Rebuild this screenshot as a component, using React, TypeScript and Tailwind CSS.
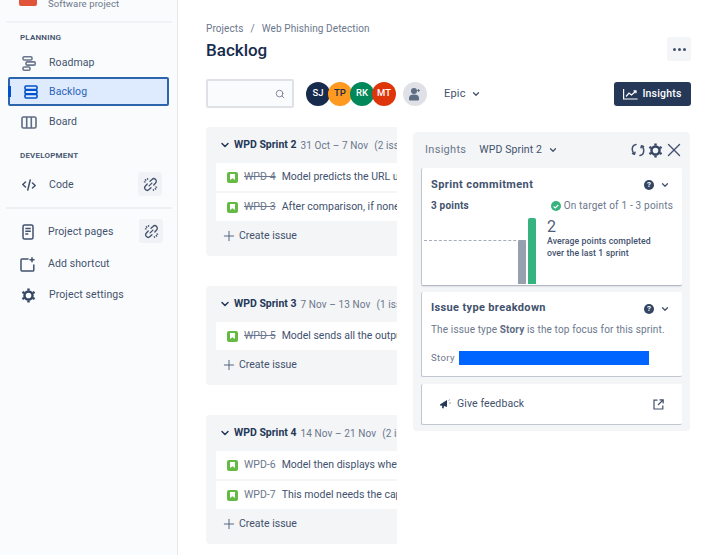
import { ChevronDown, Plus, Search, X } from "lucide-react";
import type { ReactNode } from "react";

const sprints = [
  {
    name: "WPD Sprint 2",
    dates: "31 Oct – 7 Nov",
    count: "(2 issues)",
    issues: [
      { key: "WPD-4", title: "Model predicts the URL using the trained data", done: true },
      { key: "WPD-3", title: "After comparison, if none of the URLs match", done: true },
    ],
  },
  {
    name: "WPD Sprint 3",
    dates: "7 Nov – 13 Nov",
    count: "(1 issue)",
    issues: [{ key: "WPD-5", title: "Model sends all the output to the user", done: true }],
  },
  {
    name: "WPD Sprint 4",
    dates: "14 Nov – 21 Nov",
    count: "(2 issues)",
    issues: [
      { key: "WPD-6", title: "Model then displays whether the URL is safe", done: false },
      { key: "WPD-7", title: "This model needs the capability to update", done: false },
    ],
  },
];

const avatars = [
  { text: "SJ", style: "bg-[#172b4d] text-white z-[1]" },
  { text: "TP", style: "bg-[#ff991f] text-[#172b4d] z-[2]" },
  { text: "RK", style: "bg-[#00875a] text-white z-[3]" },
  { text: "MT", style: "bg-[#de350b] text-white z-[4]" },
];

function LinkBreak() {
  return (
    <svg width="15" height="15" viewBox="0 0 16 16" fill="none" stroke="#42526e" strokeWidth="1.4" strokeLinecap="round">
      <path d="M6.5 9.5 9.5 6.5" />
      <path d="M7.5 4.500 9.600 2.600a2.600 2.600 0 0 1 3.800 3.800l-1.900 2.100" />
      <path d="M8.500 11.500 6.400 13.400a2.600 2.600 0 0 1-3.800-3.800l1.900-2.100" />
      <path d="M2.500 3 3 3.500M4.800 1.800 5 2.400M1.500 5.200l.6.1M13.500 12.800 13 12.400M11.200 14.200 11 13.600M14.500 10.800l-.6-.1" />
    </svg>
  );
}

function NavRow({ icon, label, className, tail }: { icon: ReactNode; label: string; className: string; tail?: ReactNode }) {
  return (
    <div className={`flex items-center ${className}`}>
      <div className="mt-[2px] flex w-[29px] shrink-0 justify-center">{icon}</div>
      <span className="ml-[6px] mt-[2px] text-[10.5px] tracking-[0.1px] text-[#42526e]">{label}</span>
      {tail && <div className="ml-auto flex h-6 w-6 items-center justify-center rounded-[3px] bg-[#f0f2f5]">{tail}</div>}
    </div>
  );
}

function Gear({ size, color }: { size: number; color: string }) {
  return (
    <svg width={size} height={size} viewBox="0 0 16 16" fill="none" stroke={color}>
      <circle cx="8" cy="8" r="4.300" strokeWidth="2.600" />
      <path strokeWidth="2.600" d="M8 .5v2.200M8 13.300v2.200M1.500 4.300l1.900 1.100M12.600 10.600l1.900 1.100M1.500 11.700l1.900-1.100M12.600 5.400l1.900-1.100" />
    </svg>
  );
}

function Sidebar() {
  return (
    <aside className="h-[555px] w-[178px] shrink-0 overflow-hidden border-r border-[#e6e9ee] bg-[#fafbfc]">
      <div className="mx-[6px] flex h-[23px] w-[166px] items-start border-b-2 border-[#f1f2f5]">
        <div className="relative -mt-3 ml-[13px] h-[18px] w-[18px] shrink-0 overflow-hidden rounded-[2px] bg-[#e2543a]">
          <div className="absolute left-[4px] top-[-4px] h-[9px] w-[10px] rounded-full bg-[#253858]" />
        </div>
        <span className="-mt-[2px] ml-[11px] whitespace-nowrap text-[9.5px] leading-[12px] tracking-[0.1px] text-[#6b778c]">Software project</span>
      </div>
      <div className="pl-[20px] pt-[10px] text-[8px] font-semibold leading-[10px] tracking-[0.2px] text-[#42526e]">PLANNING</div>
      <NavRow
        className="mt-[4px] h-[30px] pl-[14px]"
        label="Roadmap"
        icon={
          <svg width="14" height="15" viewBox="0 0 14 15" fill="none" stroke="#6b778c" strokeWidth="1.600">
            <rect x="1" y=".8" width="9" height="3.200" rx="1.200" />
            <rect x="4" y="5.900" width="9.200" height="3.200" rx="1.200" />
            <rect x="1" y="11" width="7" height="3.200" rx="1.200" />
          </svg>
        }
      />
      <div className="relative mx-[8px] flex h-[29px] w-[161px] items-center rounded-[2px] border-2 border-[#2c64ae] bg-[#deebff] pl-[6px]">
        <div className="absolute -left-[2px] top-[7px] h-[11px] w-[3px] bg-[#0052cc]" />
        <div className="flex w-[29px] justify-center">
          <svg width="14" height="14" viewBox="0 0 14 14" fill="none" stroke="#0052cc" strokeWidth="1.600">
            <rect x="1" y="1" width="12" height="3.600" rx="1" />
            <rect x="1" y="5.200" width="12" height="3.600" rx="1" />
            <rect x="1" y="9.400" width="12" height="3.600" rx="1" />
          </svg>
        </div>
        <span className="ml-[4px] text-[10.5px] tracking-[0.1px] text-[#2a62b6]">Backlog</span>
      </div>
      <NavRow
        className="h-[30px] pl-[14px]"
        label="Board"
        icon={
          <svg width="16" height="13" viewBox="0 0 16 13" fill="none" stroke="#5e6c84" strokeWidth="1.600">
            <rect x="1" y="1" width="14" height="11" rx="1.500" />
            <path d="M5.700 1v11M10.300 1v11" />
          </svg>
        }
      />
      <div className="pl-[20px] pt-[15px] text-[8px] font-semibold leading-[10px] tracking-[0.2px] text-[#42526e]">DEVELOPMENT</div>
      <NavRow
        className="mt-[11px] h-6 pl-[14px] pr-[15px]"
        label="Code"
        tail={<LinkBreak />}
        icon={
          <svg width="14" height="12" viewBox="0 0 14 12" fill="none" stroke="#42526e" strokeWidth="1.500" strokeLinecap="round" strokeLinejoin="round">
            <path d="M3.500 3 .8 5.500 3.500 8M10.500 4l2.700 2.500-2.700 2.500M8.200 1 5.800 11" />
          </svg>
        }
      />
      <div className="mx-[6px] mt-[11px] h-[2px] w-[166px] bg-[#eef0f3]" />
      <NavRow
        className="mt-[10px] h-6 pl-[13px] pr-[14px]"
        label="Project pages"
        tail={<LinkBreak />}
        icon={
          <svg width="12" height="16" viewBox="0 0 12 16" fill="none" stroke="#42526e" strokeWidth="1.500">
            <rect x="1" y="1" width="10" height="14" rx="1.500" />
            <path d="M3.300 4.500h5.500M3.300 7.300h5.500M3.300 10h3" />
          </svg>
        }
      />
      <NavRow
        className="mt-[8px] h-6 pl-[13px]"
        label="Add shortcut"
        icon={
          <svg width="15" height="15" viewBox="0 0 15 15" fill="none" stroke="#42526e" strokeWidth="1.500" strokeLinecap="round">
            <path d="M8 2H2a1 1 0 0 0-1 1v10a1 1 0 0 0 1 1h11a1 1 0 0 0 .8-1V8" />
            <path d="M12 .8v4M10 2.800h4" />
          </svg>
        }
      />
      <NavRow className="mt-[7px] h-6 pl-[14px]" label="Project settings" icon={<Gear size={15} color="#344563" />} />
    </aside>
  );
}

function StoryIcon() {
  return (
    <div className="flex h-[11px] w-[11px] shrink-0 items-center justify-center rounded-[2px] bg-[#65ba43]">
      <svg width="5" height="6" viewBox="0 0 5 6">
        <path d="M0 0h5v6L2.500 4.300 0 6z" fill="#fff" />
      </svg>
    </div>
  );
}

function SprintCard({ sprint }: { sprint: (typeof sprints)[number] }) {
  return (
    <section className="w-[224px] shrink-0 rounded-[4px] bg-[#f4f5f7] pb-[6px]">
      <div className="flex h-[36px] items-center whitespace-nowrap pl-[13px]">
        <ChevronDown size={12} strokeWidth={3} className="shrink-0 text-[#253858]" />
        <span className="ml-[3px] text-[10.5px] font-bold text-[#253858]">{sprint.name}</span>
        <span className="ml-[4px] text-[10px] tracking-[0.1px] text-[#6b778c]">{sprint.dates}</span>
        <span className="ml-[6px] text-[10px] tracking-[0.1px] text-[#6b778c]">{sprint.count}</span>
      </div>
      <div className="ml-[10px] flex flex-col gap-[2px]">
        {sprint.issues.map((it) => (
          <div key={it.key} className="flex h-[28px] items-center whitespace-nowrap bg-white pl-[11px] text-[10.5px]">
            <StoryIcon />
            <span className={`ml-[6px] text-[#6b778c] ${it.done ? "line-through" : ""}`}>{it.key}</span>
            <span className="ml-[6px] text-[#42526e]">{it.title}</span>
          </div>
        ))}
      </div>
      <div className="flex h-[29px] items-center pl-[15px] text-[10.5px] text-[#42526e]">
        <Plus size={16} strokeWidth={1.300} className="shrink-0" />
        <span className="ml-[2px]">Create issue</span>
      </div>
    </section>
  );
}

function HelpToggle() {
  return (
    <div className="flex items-center gap-[6px]">
      <div className="flex h-[10px] w-[10px] items-center justify-center rounded-full bg-[#344563] text-[8px] font-bold leading-none text-white">?</div>
      <ChevronDown size={10} strokeWidth={3} className="text-[#42526e]" />
    </div>
  );
}

function InsightsPanel() {
  return (
    <div className="mt-[5px] flex h-[299px] w-[277px] shrink-0 flex-col rounded-[4px] bg-[#f4f5f7] px-[8px]">
      <div className="flex h-[36px] shrink-0 items-center pl-[4px]">
        <span className="text-[11px] tracking-[0.3px] text-[#6b778c]">Insights</span>
        <span className="ml-[13px] text-[10.5px] tracking-[0.1px] text-[#42526e]">WPD Sprint 2</span>
        <ChevronDown size={10} strokeWidth={3} className="ml-[6px] text-[#42526e]" />
        <div className="-mr-[3px] ml-auto flex items-center">
          <svg width="14" height="14" viewBox="0 0 14 14" fill="none" stroke="#42526e" strokeWidth="1.500" strokeLinecap="round" strokeLinejoin="round">
            <path d="M5 1.500C2.500 2 1 4 1.300 7c.1 1.500 1 3 2.200 4M1.500 10.500l2 .7.500-2" />
            <path d="M9 12.500c2.500-.5 4-2.500 3.700-5.500-.1-1.500-1-3-2.200-4M12.500 3.500l-2-.7-.5 2" />
          </svg>
          <div className="ml-[3px]">
            <Gear size={15} color="#344563" />
          </div>
          <X size={22} strokeWidth={1.500} className="text-[#42526e]" />
        </div>
      </div>

      <div className="h-[118px] shrink-0 rounded-[2px] border-b border-l border-[#c1c7d0] border-b-[#b3bac5] bg-white shadow-[0_1px_1px_#dfe1e6]">
        <div className="flex h-[32px] items-center justify-between pl-[9px] pr-[12px] pt-[2px]">
          <span className="text-[11px] font-bold tracking-[0.4px] text-[#42526e]">Sprint commitment</span>
          <HelpToggle />
        </div>
        <div className="flex items-center justify-between pl-[9px] pr-[9px] leading-[12px]">
          <span className="text-[10px] font-bold tracking-[0.2px] text-[#42526e]">3 points</span>
          <span className="flex items-center text-[10px] tracking-[0.2px] text-[#6b778c]">
            <span className="mr-[3px] flex h-[10px] w-[10px] items-center justify-center rounded-full bg-[#36b37e]">
              <svg width="6" height="5" viewBox="0 0 6 5" fill="none" stroke="#fff" strokeWidth="1.200">
                <path d="M.7 2.500 2.300 4 5.300 1" />
              </svg>
            </span>
            On target of 1 - 3 points
          </span>
        </div>
        <div className="flex items-end">
          <div className="relative mt-[6px] flex h-[66px] w-[114px] shrink-0 items-end gap-[2px] pl-[96px]">
            <div className="absolute left-[2px] right-0 top-[22px] border-t border-dashed border-[#a5adba]" />
            <div className="relative h-[44px] w-[8px] shrink-0 rounded-t-[2px] bg-[#97a0af]" />
            <div className="relative h-[66px] w-[8px] shrink-0 rounded-t-[2px] bg-[#36b37e]" />
          </div>
          <div className="ml-[11px] self-start pt-[7px]">
            <div className="text-[16px] leading-[15px] tracking-[0.2px] text-[#505f79]">2</div>
            <div className="mt-[1px] whitespace-nowrap text-[8.7px] font-medium leading-[12px] tracking-[0.1px] text-[#42526e]">
              Average points completed
              <br />
              over the last 1 sprint
            </div>
          </div>
        </div>
      </div>

      <div className="mt-[6px] h-[85px] shrink-0 rounded-[2px] border-b border-l border-b-[#c1c7d0] border-l-[#c1c7d0] bg-white pl-[9px] pr-[12px]">
        <div className="flex h-[31px] items-center justify-between pt-[2px]">
          <span className="text-[11px] font-bold tracking-[0.35px] text-[#42526e]">Issue type breakdown</span>
          <HelpToggle />
        </div>
        <div className="whitespace-nowrap text-[10px] leading-[14px] tracking-[0.14px] text-[#6b778c]">
          The issue type <b className="font-bold text-[#5e6c84]">Story</b> is the top focus for this sprint.
        </div>
        <div className="mt-[14px] flex items-center">
          <span className="w-[28px] text-[9.5px] tracking-[0.4px] text-[#6b778c]">Story</span>
          <div className="h-[14px] w-[190px] bg-[#0065ff]" />
        </div>
      </div>

      <div className="mt-[7px] flex h-[41px] shrink-0 items-center rounded-[2px] border-b border-l border-b-[#c1c7d0] border-l-[#c1c7d0] bg-white pl-[18px] pr-[18px]">
        <svg width="11" height="10" viewBox="0 0 11 10">
          <path d="M0 5.500 7 1v7L4 7l-.5 2.500L2 9l.3-2.300L0 6.500z" fill="#253858" />
          <path d="M8.500 1.500 10 .5M9 4h2" stroke="#7a869a" strokeWidth="0.800" />
        </svg>
        <span className="ml-[6px] text-[10.5px] tracking-[0.1px] text-[#42526e]">Give feedback</span>
        <svg className="ml-auto" width="11" height="11" viewBox="0 0 11 11" fill="none" stroke="#42526e" strokeWidth="1.200">
          <path d="M4.500 1.200H1v8.800h8.800V6.500" />
          <path d="M6.500.8h3.700v3.700M10 1 5 6" />
        </svg>
      </div>
    </div>
  );
}

export default function App() {
  return (
    <div className="flex h-[555px] w-[720px] overflow-hidden bg-white font-['Roboto',sans-serif]">
      <Sidebar />
      <main className="min-w-0 flex-1 pl-[28px] pr-[29px]">
        <div className="pt-[22px] text-[10px] leading-[14px] tracking-[0.1px] text-[#6b778c]">
          Projects<span className="mx-[7px]">/</span>Web Phishing Detection
        </div>
        <div className="mt-[1px] flex items-start justify-between">
          <h1 className="text-[17px] font-medium leading-[26px] text-[#172b4d]">Backlog</h1>
          <button className="flex h-6 w-6 items-center justify-center gap-[2px] rounded-[3px] bg-[#f4f5f7]">
            <span className="h-[3px] w-[3px] rounded-full bg-[#42526e]" />
            <span className="h-[3px] w-[3px] rounded-full bg-[#42526e]" />
            <span className="h-[3px] w-[3px] rounded-full bg-[#42526e]" />
          </button>
        </div>

        <div className="mt-[16px] flex h-[29px] items-center">
          <div className="flex h-[29px] w-[88px] items-center justify-end rounded-[2px] border-2 border-[#dfe1e6] bg-[#fafbfc] pr-[7px]">
            <Search size={10} className="text-[#6b778c]" />
          </div>
          <div className="ml-[12px] flex">
            {avatars.map((a, i) => (
              <div
                key={a.text}
                className={`relative flex h-6 w-6 items-center justify-center rounded-full text-[9.5px] font-medium ${a.style} ${i > 0 ? "-ml-[2px]" : ""}`}
              >
                {a.text}
              </div>
            ))}
          </div>
          <div className="ml-[7px] flex h-6 w-6 items-center justify-center rounded-full bg-[#dfe1e6]">
            <svg width="14" height="14" viewBox="0 0 14 14" fill="#5e6c84">
              <circle cx="6" cy="4" r="3" />
              <path d="M1 11c0-2.500 2-3.500 5-3.500s5 1 5 3.500v1.500a1 1 0 0 1-1 1H2a1 1 0 0 1-1-1z" />
              <path d="M10.500 2v3M9 3.500h3" stroke="#5e6c84" strokeWidth="0.900" />
            </svg>
          </div>
          <span className="ml-[17px] mt-[2px] text-[11px] tracking-[0.2px] text-[#42526e]">Epic</span>
          <ChevronDown size={10} strokeWidth={3} className="ml-[5px] mt-[1px] text-[#42526e]" />
          <button className="ml-auto flex h-6 w-[77px] items-center justify-center rounded-[3px] bg-[#253858] text-[10.5px] font-medium tracking-[0.2px] text-white">
            <svg className="mr-[4px]" width="15" height="12" viewBox="0 0 15 12" fill="none" stroke="#fff" strokeWidth="1.200">
              <path d="M.6 1v10h14" />
              <path d="M3 8.500 6 5l2.500 2L13 3M10.500 2.800H13v2.500" />
            </svg>
            Insights
          </button>
        </div>

        <div className="mt-[19px] flex gap-[16px]">
          <div className="flex h-[428px] w-[191px] shrink-0 flex-col gap-[30px] overflow-hidden">
            {sprints.map((s) => (
              <SprintCard key={s.name} sprint={s} />
            ))}
          </div>
          <InsightsPanel />
        </div>
      </main>
    </div>
  );
}
